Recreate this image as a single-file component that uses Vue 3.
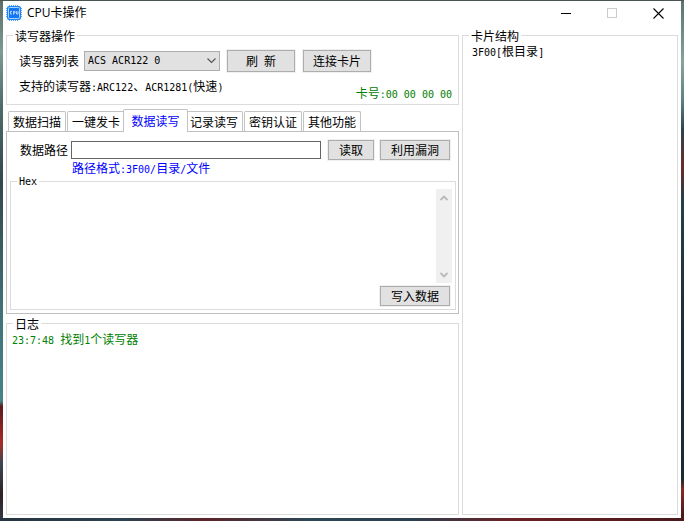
<script setup>
import { ref } from 'vue'

const tabs = ['数据扫描', '一键发卡', '数据读写', '记录读写', '密钥认证', '其他功能']
const active = ref(2)
const reader = ref('ACS ACR122 0')
const path = ref('')
const hex = ref('')
</script>

<template>
  <div class="desktop">
    <main class="window">
      <header class="titlebar">
        <svg class="logo" viewBox="0 0 16 16" aria-hidden="true">
          <path
            d="M3.5 0v16M5.5 0v16M7.5 0v16M9.5 0v16M11.5 0v16M0 3.5h16M0 5.5h16M0 7.5h16M0 9.5h16M0 11.5h16"
            stroke="#5aa5f5" stroke-width="1" />
          <rect x="1" y="1" width="14" height="14" rx="2" fill="#1c86f8" />
          <rect x="2.5" y="2.5" width="11" height="11" rx="1" fill="#2f8ffb" stroke="#a9d2ff" stroke-width="1" />
          <rect x="3" y="3" width="10" height="10" rx="1" fill="#1677f5" />
          <path
            d="M6 6.5H4.5v2.5H6M7.5 9.5v-3h1.5v1.5H7.5M10.5 6.2v2.8h1.5v-2.8"
            fill="none" stroke="#d5e9ff" stroke-width="0.8" />
        </svg>
        <h1 class="title">CPU卡操作</h1>
        <button class="sys" type="button" aria-label="最小化">
          <svg viewBox="0 0 11 11"><path d="M0 5.5h10" stroke="#000" /></svg>
        </button>
        <button class="sys" type="button" aria-label="最大化" disabled>
          <svg viewBox="0 0 11 11"><rect x="0.5" y="0.5" width="9" height="9" fill="none" stroke="#ccc" /></svg>
        </button>
        <button class="sys" type="button" aria-label="关闭">
          <svg viewBox="0 0 11 11"><path d="M0.5 0.5l10 10M10.5 0.5l-10 10" stroke="#000" stroke-width="1.1" /></svg>
        </button>
      </header>

      <div class="content">
        <div class="left">
          <fieldset class="group reader">
            <legend>读写器操作</legend>
            <div class="row">
              <label class="reader-label" for="reader">读写器列表</label>
              <div class="combo">
                <select id="reader" v-model="reader">
                  <option>ACS ACR122 0</option>
                </select>
                <svg class="arrow" viewBox="0 0 9 6"><path d="M0.5 0.5l4 4 4-4" fill="none" stroke="#555" stroke-width="1.1" /></svg>
              </div>
              <button class="btn wide first" type="button">刷<span class="m">&nbsp;</span>新</button>
              <button class="btn wide" type="button">连接卡片</button>
            </div>
            <div class="info">
              <span>支持的读写器<span class="m">:ARC122</span>、<span class="m">ACR1281(</span>快速<span class="m">)</span></span>
              <output class="card">卡号<span class="m">:00 00 00 00</span></output>
            </div>
          </fieldset>

          <nav class="tabs" role="tablist">
            <button
              v-for="(tab, i) in tabs"
              :key="tab"
              class="tab"
              :class="{ on: i === active }"
              type="button"
              role="tab"
              :aria-selected="i === active"
              @click="active = i"
            >{{ tab }}</button>
          </nav>
          <section class="panel" role="tabpanel">
            <div class="path-row">
              <label for="path">数据路径</label>
              <input id="path" v-model="path" type="text" />
              <button class="btn read" type="button">读取</button>
              <button class="btn action" type="button">利用漏洞</button>
            </div>
            <p class="hint">路径格式<span class="m">:3F00/</span>目录<span class="m">/</span>文件</p>
            <fieldset class="group hex">
              <legend><label class="m" for="hex">Hex</label></legend>
              <div class="editor">
                <textarea id="hex" v-model="hex"></textarea>
                <div class="scroll" aria-hidden="true">
                  <svg viewBox="0 0 8 6"><path d="M0.5 5L4 1.500L7.500 5" fill="none" stroke="#b8b8b8" stroke-width="1.8" /></svg>
                  <svg viewBox="0 0 8 6"><path d="M0.5 1L4 4.500L7.500 1" fill="none" stroke="#b8b8b8" stroke-width="1.8" /></svg>
                </div>
              </div>
              <button class="btn action write" type="button">写入数据</button>
            </fieldset>
          </section>

          <fieldset class="group log">
            <legend>日志</legend>
            <p class="log-line"><span class="m">23:7:48 </span>找到<span class="m">1</span>个读写器</p>
          </fieldset>
        </div>

        <fieldset class="group tree">
          <legend>卡片结构</legend>
          <p class="node"><span class="m">3F00[</span>根目录<span class="m">]</span></p>
        </fieldset>
      </div>
    </main>
  </div>
</template>

<style>
body {
  margin: 0;
}
</style>

<style scoped>
.desktop {
  box-sizing: border-box;
  display: flex;
  min-height: 100vh;
  padding: 1px 3px 3px;
  color: #000;
  font: 12px/16px "Noto Sans CJK SC", sans-serif;
  background:
    linear-gradient(#4a5552, #4a5552) top / 100% 1px no-repeat,
    linear-gradient(90deg, #26343f, #2d4150 18%, #5c2429 30%, #2d4655 45%, #2b3f4f 60%, #6b2024 75%, #4a1a1c) bottom / 100% 3px no-repeat,
    linear-gradient(#5c6d67, #7d9a94 10%, #4f6d6a 20%, #35474d 35%, #3f7378 60%, #478287 77%, #5a1c1c 78%, #a82c28 85%, #3d4652 89%, #2c2226 95%, #363a4a) left / 3px 100% no-repeat,
    linear-gradient(#5b7370, #86a39e 12%, #5f8482 19%, #2b4450 25%, #6b2a28 32%, #26404a 38%, #1e3038 60%, #1c2a30 92%, #8a2824 94%, #3a181a) right / 3px 100% no-repeat;
}
.window {
  flex: 1;
  min-width: 0;
  display: flex;
  flex-direction: column;
  background: #fff;
}
.m {
  font-family: "DejaVu Sans Mono", monospace;
  font-size: 10px;
  line-height: 10px;
  white-space: pre;
}
button,
input,
select,
textarea {
  box-sizing: border-box;
  margin: 0;
  padding: 0;
  border: 0;
  border-radius: 0;
  color: inherit;
  font: inherit;
}
p {
  margin: 0;
}

.titlebar {
  display: flex;
  align-items: center;
  height: 24px;
  margin-bottom: 3px;
  padding-left: 3px;
}
.logo {
  width: 16px;
  height: 16px;
}
.title {
  flex: 1;
  margin: 0 0 0 5px;
  font: 12px/16px "Open Sans", "Noto Sans CJK SC", sans-serif;
}
.sys {
  display: grid;
  place-items: center;
  width: 46px;
  height: 25px;
  background: none;
}
.sys svg {
  width: 11px;
  height: 11px;
}

.content {
  flex: 1;
  display: grid;
  grid-template-columns: 453fr 216fr;
  gap: 3px;
  padding: 0 3px 3px;
}
.left {
  display: flex;
  flex-direction: column;
  min-width: 0;
}
.group {
  min-width: 0;
  margin: 0;
  padding: 0;
  border: 1px solid #dcdcdc;
}
.group legend {
  margin-left: 6px;
  padding: 0 2px;
  line-height: 15px;
}
.btn {
  height: 20px;
  border: 1px solid #adadad;
  background: #e1e1e1;
  box-shadow: 0 0 0 1px #f0f0f0;
  line-height: 16px;
}

.row {
  display: flex;
  align-items: center;
  padding: 7px 0 6px 12px;
}
.reader-label {
  margin-right: 5px;
}
.combo {
  display: grid;
  align-items: center;
  width: 136px;
}
.combo > * {
  grid-area: 1 / 1;
}
.combo select {
  width: 100%;
  height: 20px;
  padding: 0 3px;
  appearance: none;
  border: 1px solid #adadad;
  background: #e1e1e1;
  font: 10px/16px "DejaVu Sans Mono", monospace;
}
.arrow {
  justify-self: end;
  width: 9px;
  height: 6px;
  margin-right: 4px;
  pointer-events: none;
}
.btn.wide {
  width: 68px;
  height: 22px;
  margin-left: 8px;
}
.btn.first {
  margin-left: 7px;
}
.info {
  display: flex;
  justify-content: space-between;
  height: 23px;
  padding: 0 6px 3px 12px;
}
.card {
  align-self: flex-end;
  color: #008000;
}

.tabs {
  display: flex;
  align-items: flex-end;
  gap: 1px;
  padding: 4px 0 0 2px;
}
.tab {
  width: 58px;
  height: 20px;
  border: 1px solid #c3c3c3;
  border-bottom: 0;
  border-radius: 2px 2px 0 0;
  background: #fff;
}
.tab.on {
  z-index: 1;
  width: 65px;
  height: 23px;
  margin: 0 -4px -1px -3px;
  padding-bottom: 1px;
  color: #00f;
}
.panel {
  border: 1px solid #bfbfbf;
}
.path-row {
  display: flex;
  align-items: center;
  padding: 8px 8px 0 13px;
}
.path-row input {
  flex: 1;
  min-width: 0;
  height: 18px;
  margin: 0 7px 0 3px;
  padding: 0 2px;
  border: 1px solid #646464;
  background: #fff;
}
.btn.read {
  width: 46px;
  margin-right: 6px;
}
.btn.action {
  width: 70px;
}
.hint {
  padding-left: 65px;
  color: #00f;
  line-height: 15px;
}
.group.hex {
  display: flex;
  flex-direction: column;
  margin: 0 2px 3px 3px;
  padding: 1px 3px 3px 1px;
}
.group.hex legend {
  margin-left: 5px;
  line-height: 13px;
}
.group.hex label {
  display: block;
  line-height: 13px;
}
.editor {
  display: flex;
  height: 94px;
}
.editor textarea {
  flex: 1;
  min-width: 0;
  padding: 2px;
  resize: none;
  background: #fff;
}
.scroll {
  display: flex;
  flex-direction: column;
  align-items: center;
  justify-content: space-between;
  box-sizing: border-box;
  width: 16px;
  padding: 6px 0 5px;
  background: #f0f0f0;
}
.scroll svg {
  width: 8px;
  height: 6px;
}
.btn.write {
  align-self: flex-end;
  margin: 3px 2px 0 0;
}

.log {
  flex: 1;
  margin-top: 2px;
}
.log-line {
  padding: 0 5px;
  color: #008000;
}
.node {
  padding: 0 9px;
}
</style>
